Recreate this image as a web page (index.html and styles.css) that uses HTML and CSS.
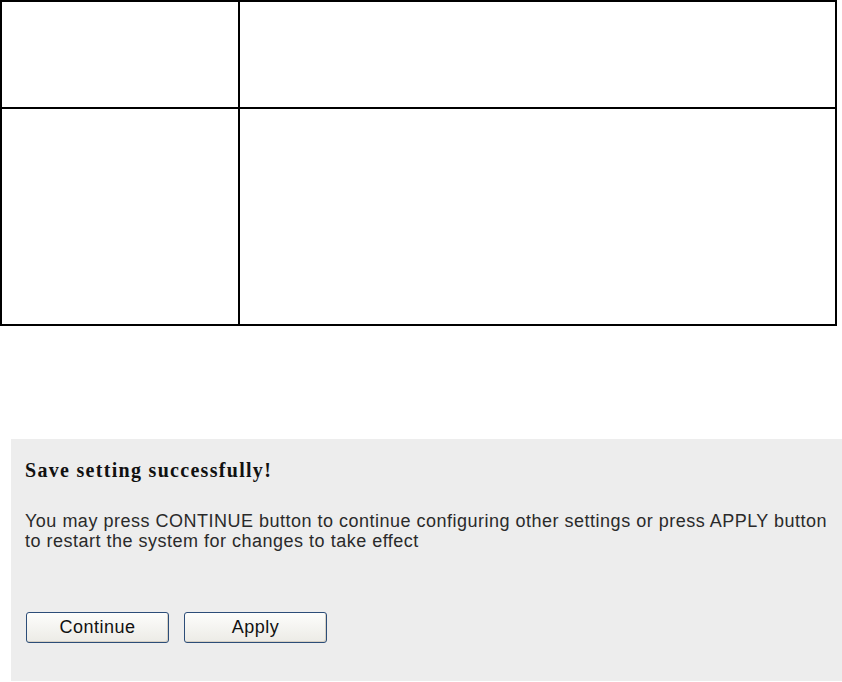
FILE: index.html
```html
<!DOCTYPE html>
<html lang="en">
<head>
    <meta charset="UTF-8">
    <title>Save setting</title>
    <link rel="stylesheet" href="styles.css">
</head>
<body>
    <table class="spec-table">
        <tr class="row-short">
            <td class="col-label"></td>
            <td class="col-desc"></td>
        </tr>
        <tr class="row-tall">
            <td class="col-label"></td>
            <td class="col-desc"></td>
        </tr>
    </table>

    <div class="save-panel">
        <h2 class="save-title">Save setting successfully!</h2>
        <p class="save-text">You may press CONTINUE button to continue configuring other settings or press APPLY button<br>to restart the system for changes to take effect</p>
        <div class="buttons-row">
            <button class="btn">Continue</button>
            <button class="btn">Apply</button>
        </div>
    </div>
</body>
</html>
```

FILE: styles.css
```css
body {
    margin: 0;
    background: #fff;
    font-family: 'Liberation Sans', Arial, sans-serif;
}
.spec-table {
    width: 837px;
    border-collapse: collapse;
    border: 2px solid #000;
}
.spec-table td {
    border: 2px solid #000;
    padding: 0;
}
.col-label {
    width: 236px;
}
.row-short td {
    height: 105px;
}
.row-tall td {
    height: 215px;
}
.save-panel {
    margin: 113px 0 0 11px;
    height: 242px;
    background: #ededed;
    padding: 19px 0 0 14px;
    box-sizing: border-box;
}
.save-title {
    margin: 0;
    font-family: 'Liberation Serif', 'Times New Roman', serif;
    font-size: 20px;
    line-height: 24px;
    letter-spacing: 1.3px;
    font-weight: bold;
    color: #111;
}
.save-text {
    margin: 29px 0 0;
    font-size: 18px;
    line-height: 20px;
    letter-spacing: 0.5px;
    color: #2a2a2a;
    white-space: nowrap;
}
.buttons-row {
    margin-top: 61px;
    display: flex;
    gap: 15px;
    padding-left: 1px;
}
.btn {
    width: 143px;
    height: 31px;
    font-family: 'Liberation Sans', Arial, sans-serif;
    font-size: 18px;
    letter-spacing: 0.5px;
    color: #111;
    background: linear-gradient(#fdfdfb, #ecebe6);
    border: 1px solid #2c4d78;
    border-radius: 3px;
    box-shadow: inset -1px -1px 0 #d6d0c4;
    padding: 0;
}
```
